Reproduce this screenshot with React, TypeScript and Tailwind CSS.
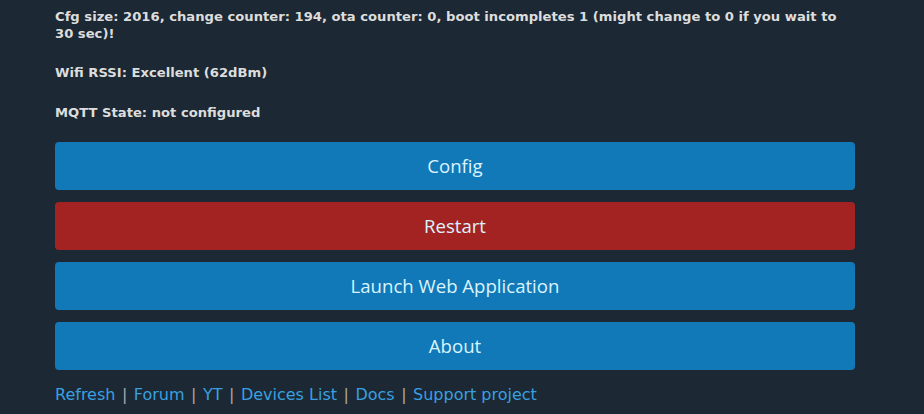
import React from "react";

const buttons = [
  { label: "Config", tone: "bg-[#1179b8]" },
  { label: "Restart", tone: "bg-[#a32323]" },
  { label: "Launch Web Application", tone: "bg-[#1179b8]" },
  { label: "About", tone: "bg-[#1179b8]" },
];

const links = ["Refresh", "Forum", "YT", "Devices List", "Docs", "Support project"];

export default function App() {
  return (
    <div className="h-[414px] w-[924px] overflow-hidden bg-[#1c2833] px-[55px] font-['DejaVu_Sans',sans-serif]">
      <div className="w-[800px] pt-[8px] text-[13.15px] font-bold leading-[17px] text-[#dddddd]">
        <p>
          Cfg size: 2016, change counter: 194, ota counter: 0, boot incompletes 1 (might change to 0 if you wait to
          30 sec)!
        </p>
        <p className="mt-[22px]">Wifi RSSI: Excellent (62dBm)</p>
        <p className="mt-[23px]">MQTT State: not configured</p>
      </div>

      <div className="mt-[21px] flex w-[800px] flex-col gap-3">
        {buttons.map((b) => (
          <button
            key={b.label}
            className={`${b.tone} flex h-12 items-center justify-center rounded-[4px] pb-px font-['Open_Sans',sans-serif] text-[18.6px] text-[#d9f4ff]`}
          >
            {b.label}
          </button>
        ))}
      </div>

      <div className="mt-[15px] flex items-center text-[16px] leading-5">
        {links.map((l, i) => (
          <React.Fragment key={l}>
            {i > 0 && <span className="mx-[6.5px] text-[#aaaaaa]">|</span>}
            <a href="#" className="text-[#38a0e0]">
              {l}
            </a>
          </React.Fragment>
        ))}
      </div>
    </div>
  );
}
